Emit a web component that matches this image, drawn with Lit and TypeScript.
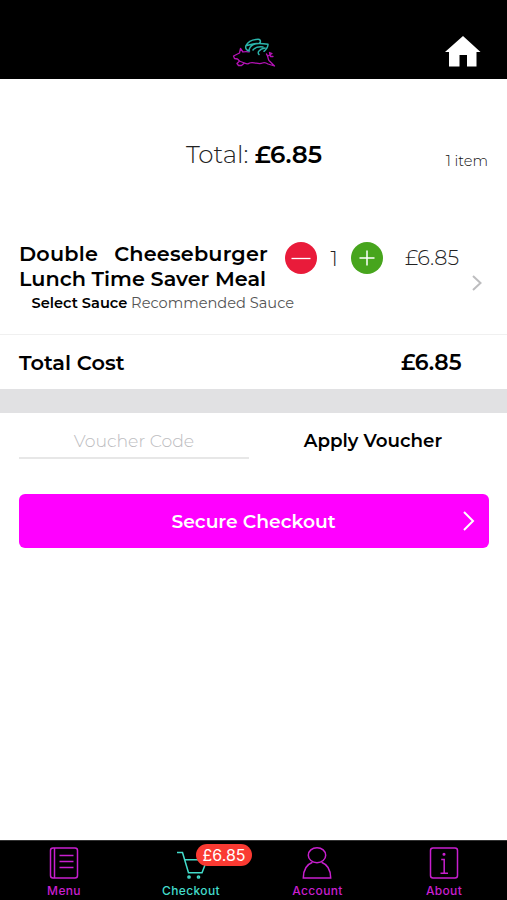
import { LitElement, html, svg, css } from "lit";
import { customElement, property } from "lit/decorators.js";

const menuIcon = svg`<rect x="2.5" y="1" width="27" height="30" rx="2.5"/><path d="M6.500 1v30M11.500 8.500h14M11.500 14.500h14M11.500 20.500h14"/>`;
const cartIcon = svg`<path d="M2 5.500h5.500l6 20.300h13.500l5-13h-22.500"/><circle cx="14" cy="30" r="1.100"/><circle cx="23.500" cy="30" r="1.100"/>`;
const accountIcon = svg`<ellipse cx="16" cy="8.200" rx="8.700" ry="7.500"/><path d="M11.500 15.200C5.500 17.500 2.300 22 2.300 31h27.400c0-9-3.200-13.500-9.200-15.800"/>`;
const aboutIcon = svg`<rect x="2.500" y="1" width="27" height="30" rx="2.500"/><path d="M13.200 12.500h3v13.500M12.500 26.200h7.500"/><circle cx="16" cy="7.300" r=".8"/>`;

@customElement("tab-item")
class TabItem extends LitElement {
  @property() label = "";
  @property({ attribute: false }) icon: unknown;
  @property() badge = "";
  @property({ type: Boolean }) active = false;

  static styles = css`
    :host { position: relative; display: flex; flex-direction: column; align-items: center; color: #c81fce; padding-top: 5px; }
    :host([active]) { color: #43dccb; }
    .icon { width: 34px; height: 34px; fill: none; stroke: currentColor; stroke-width: 1.5; display: block; overflow: visible; }
    .label { font: 500 12px/15px Inter, sans-serif; letter-spacing: 0.35px; margin-top: 3px; padding-left: 1px; }
    .badge { position: absolute; left: 69px; top: 3px; width: 56px; height: 22px; border-radius: 11px; background: #fa3a32; color: #fff; font: 400 16px/22px Inter, sans-serif; text-align: center; }
  `;
  render() {
    return html`<svg class="icon" viewBox="-1 -1 34 34">${this.icon}</svg>
      <span class="label">${this.label}</span>
      ${this.badge ? html`<span class="badge">${this.badge}</span>` : ""}`;
  }
}

@customElement("app-root")
class AppRoot extends LitElement {
  static styles = css`
    * { box-sizing: border-box; }
    :host { display: flex; flex-direction: column; width: 100%; height: 900px; background: #fff; color: #000; font-family: Montserrat, Inter, sans-serif; overflow: hidden; }
    svg { display: block; }
    .top { height: 79px; background: #000; display: grid; grid-template-columns: 1fr 44px 1fr; padding: 35px 26px 0; flex: none; }
    .pig { grid-column: 2; fill: none; stroke: #b512b6; stroke-width: 1.3; stroke-linejoin: round; stroke-linecap: round; }
    .wing { stroke: #2bb5ac; stroke-width: 1.5; }
    .home { grid-column: 3; justify-self: end; }
    .summary { height: 156px; flex: none; display: grid; grid-template-columns: 1fr auto 1fr; align-items: start; padding: 59px 19px 0; }
    .sum { grid-column: 2; font-size: 24.500px; font-weight: 300; line-height: 32px; white-space: nowrap; color: #222; padding-left: 1px; }
    .sum b { font-weight: 600; color: #000; }
    .count { justify-self: end; font-size: 14.600px; font-weight: 300; line-height: 20px; padding-top: 13px; color: #111; }
    .item { height: 100px; flex: none; display: grid; grid-template-columns: 249px auto 1fr; padding: 6px 24px 0 19px; border-bottom: 1px solid #f0f0f0; }
    .name { font-size: 20.750px; font-weight: 600; line-height: 25px; white-space: nowrap; display: flex; flex-direction: column; }
    .name div { display: flex; justify-content: space-between; }
    .first { letter-spacing: 0.2px; }
    .option { font-size: 14.600px; line-height: 25px; margin: 0 0 0 12.500px; font-weight: 400; color: #555; white-space: nowrap; }
    .option b { font-weight: 600; color: #000; }
    .stepper { display: flex; align-items: center; height: 34px; margin-left: 17px; }
    .qty { width: 34px; text-align: center; font-size: 20.500px; font-weight: 300; color: #222; }
    .right { display: flex; flex-direction: column; align-items: flex-end; }
    .price { font-size: 20.800px; font-weight: 300; line-height: 33px; color: #222; padding-right: 24px; }
    .total { height: 54px; flex: none; display: flex; justify-content: space-between; align-items: center; padding: 1px 45.500px 0 19px; font-size: 20.900px; font-weight: 600; }
    .cost { font-size: 22px; }
    .band { height: 24px; flex: none; background: #e1e1e3; }
    .voucher { height: 81px; flex: none; display: grid; grid-template-columns: 230px 1fr; column-gap: 9px; padding: 0 19px; }
    .code { height: 46px; border-bottom: 2px solid #e7e7e7; color: #bcbcc0; font-size: 17.300px; font-weight: 300; line-height: 55px; text-align: center; }
    .apply { height: 46px; font-size: 18.300px; font-weight: 600; line-height: 56px; text-align: center; }
    .checkout { flex: none; height: 54px; margin: 0 18px 0 19px; border-radius: 6px; background: #ff00ff; color: #fff; display: grid; grid-template-columns: 1fr auto 1fr; align-items: center; padding: 0 14px; font-size: 18.700px; font-weight: 600; }
    .label { grid-column: 2; padding: 1px 1px 0 0; }
    .go { justify-self: end; }
    .tabs { margin-top: auto; height: 60px; flex: none; background: #000; border-top: 1px solid #333; display: grid; grid-template-columns: 127px 127px 126px 127px; }
  `;
  render() {
    return html`
      <header class="top">
        <svg class="pig" width="44" height="34" viewBox="0 0 44 34">
          <path d="M17 17c-2-.6-4-.6-6 0L8.500 13.500 7.500 18 3.500 20 1.500 21l1 2.500 3 .5 2 2M7.500 26L5 28.500 6.500 30.500M8.500 26.500l4 1.500-3 2.500-3 0M12.500 28c2 1 4 1 5 0 5-1.500 9 2 13 0 2-1 4 0 5.500 1l6.500 2-5.500-5.500c-1.500-2-.5-4-2.500-6.500M36 21l4-2.500-2.500-1 1 4 2.500 0"/>
          <path class="wing" d="M17.500 16c-3 0-4.500-3-3.500-5.500C16 6.500 20 4.300 26 4.300c2 0 3 1.500 2 3.200M17 15c1-4 5-6.500 10-6.500 3 0 6 .3 9 .8 0 3-1.500 5-4 7M15 10.500c2 0 5-2 10-2M21 15c2-2.500 6-3.500 10-3M27 19.500c-1-1-1-2.500 0-3.500 1.500-2 3.500-2.500 6-3"/>
        </svg>
        <svg class="home" width="36" height="32" viewBox="0 0 36 32"><path fill="#fff" d="M18 1l17.500 16h-4v14.500H22V20h-7.500v11.500H4V17H0z"/></svg>
      </header>
      <section class="summary">
        <div class="sum">Total: <b>£6.85</b></div>
        <div class="count">1 item</div>
      </section>
      <section class="item">
        <div class="name">
          <div class="first"><span>Double</span><span>Cheeseburger</span></div>
          <span>Lunch Time Saver Meal</span>
          <span class="option"><b>Select Sauce</b> Recommended Sauce</span>
        </div>
        <div class="stepper">
          <svg width="32" height="32" viewBox="0 0 32 32"><circle cx="16" cy="16" r="16" fill="#e91b3a"/><path d="M6.500 16.500h19" stroke="#fff" stroke-width="1.300"/></svg>
          <span class="qty">1</span>
          <svg width="32" height="32" viewBox="0 0 32 32"><circle cx="16" cy="16" r="16" fill="#47a51d"/><path d="M8.500 16h15M16 8.500v15" stroke="#fff" stroke-width="1.500"/></svg>
        </div>
        <div class="right">
          <span class="price">£6.85</span>
          <svg width="12" height="18" viewBox="0 0 12 18" fill="none" stroke="#bdbdbf" stroke-width="2"><path d="M2 2l7.500 7L2 16"/></svg>
        </div>
      </section>
      <section class="total"><span>Total Cost</span><span class="cost">£6.85</span></section>
      <div class="band"></div>
      <section class="voucher">
        <div class="code">Voucher Code</div>
        <div class="apply">Apply Voucher</div>
      </section>
      <div class="checkout">
        <span class="label">Secure Checkout</span>
        <svg class="go" width="13" height="22" viewBox="0 0 13 22" fill="none" stroke="#fff" stroke-width="2"><path d="M2 2l9 9-9 9"/></svg>
      </div>
      <nav class="tabs">
        <tab-item label="Menu" .icon=${menuIcon}></tab-item>
        <tab-item label="Checkout" .icon=${cartIcon} badge="£6.85" active></tab-item>
        <tab-item label="Account" .icon=${accountIcon}></tab-item>
        <tab-item label="About" .icon=${aboutIcon}></tab-item>
      </nav>`;
  }
}
